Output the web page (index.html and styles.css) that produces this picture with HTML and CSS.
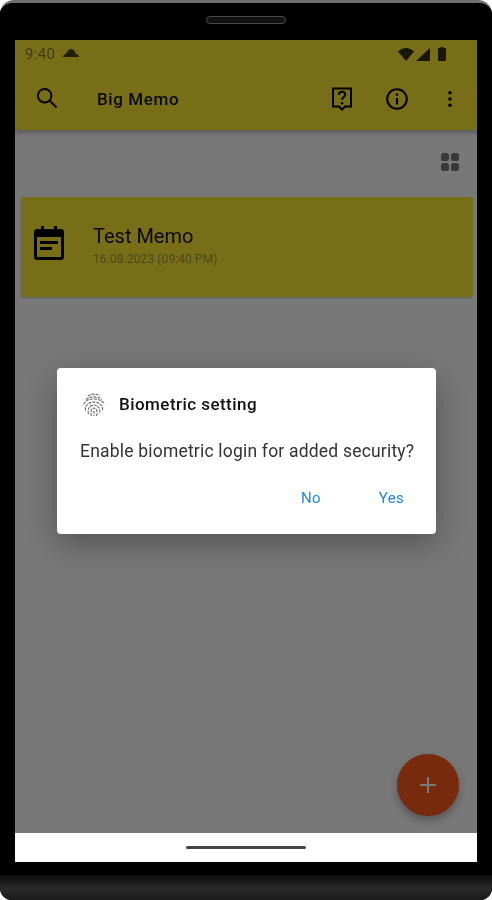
FILE: index.html
```html
<!DOCTYPE html>
<html lang="en">
<head>
<meta charset="utf-8">
<title>Big Memo</title>
<link rel="stylesheet" href="styles.css">
</head>
<body>
<div class="phone">
  <div class="bezel-top"><div class="speaker"></div></div>
  <div class="screen">
    <div class="app">
      <header class="appbar">
        <div class="status">
          <span class="time">9:40</span>
          <svg class="cloud" viewBox="0 0 16 8"><path d="M0 8C0 6 1.500 5 3 5C4 2 6 0 8 0C10.500 0 12 2 13 5C14.500 5 16 6 16 8Z"/></svg>
          <span class="status-right">
            <svg class="wifi" viewBox="0 0 16 13"><path d="M0 3.500C2 1.300 5 0 8 0C11 0 14 1.300 16 3.500L8 13Z"/></svg>
            <svg class="signal" viewBox="0 0 14 13"><path d="M14 0V13H0Z"/></svg>
            <svg class="battery" viewBox="0 0 8 14"><path d="M2.500 0H5.500V1H7C7.600 1 8 1.400 8 2V13C8 13.600 7.600 14 7 14H1C.4 14 0 13.600 0 13V2C0 1.400 .4 1 1 1H2.500Z"/></svg>
          </span>
        </div>
        <div class="toolbar">
          <svg class="ic-search" viewBox="0 0 24 24"><circle class="search-ring" cx="9.500" cy="9.500" r="6"/><path class="search-handle" d="M14 14L20 20"/></svg>
          <h1 class="title">Big Memo</h1>
          <svg class="ic-help" viewBox="0 0 22 24"><path class="line" d="M2 1.500H20V19.500H14L11 22.500L8 19.500H2Z"/><path class="line" d="M7.800 8C7.800 6 9.200 4.800 11 4.800C12.800 4.800 14.200 6 14.200 7.700C14.200 10 11 10.200 11 13"/><circle cx="11" cy="16.300" r="1.300"/></svg>
          <svg class="ic-info" viewBox="0 0 24 24"><path d="M11 7h2v2h-2zm0 4h2v6h-2zm1-9C6.480 2 2 6.480 2 12s4.480 10 10 10 10-4.480 10-10S17.520 2 12 2zm0 18c-4.410 0-8-3.590-8-8s3.590-8 8-8 8 3.590 8 8-3.590 8-8 8z"/></svg>
          <svg class="ic-more" viewBox="0 0 6 20"><circle cx="3" cy="3" r="2"/><circle cx="3" cy="10" r="2"/><circle cx="3" cy="17" r="2"/></svg>
        </div>
      </header>
      <main class="content">
        <div class="view-row">
          <svg class="ic-grid" viewBox="0 0 18 18"><rect width="8" height="8" rx="2.500"/><rect x="10" width="8" height="8" rx="2.500"/><rect y="10" width="8" height="8" rx="2.500"/><rect x="10" y="10" width="8" height="8" rx="2.500"/></svg>
        </div>
        <article class="memo">
          <svg class="ic-cal" viewBox="0 0 30 34"><path d="M7 0H10V3H20V0H23V3H27C28.700 3 30 4.300 30 6V31C30 32.700 28.700 34 27 34H3C1.300 34 0 32.700 0 31V6C0 4.300 1.300 3 3 3H7ZM3 11V31H27V11ZM6 15H24V18H6ZM6 21H18V24H6Z" fill-rule="evenodd"/></svg>
          <div class="memo-text">
            <div class="memo-title">Test Memo</div>
            <div class="memo-date">16.08.2023 (09:40 PM)</div>
          </div>
        </article>
      </main>
      <button class="fab" type="button">
        <svg viewBox="0 0 16 16"><path d="M7 0H9V7H16V9H9V16H7V9H0V7H7Z"/></svg>
      </button>
      <div class="scrim"></div>
      <div class="dialog">
        <div class="dialog-head">
          <svg class="ic-finger" viewBox="0 0 24 24"><g class="fp"><path d="M6 3.500C9.500 1 14.500 1 18 3.500"/><path d="M4 7C8.500 3.500 15.500 3.500 20 7"/><path d="M2 12C2.500 8.500 7 6.500 12 6.500C17 6.500 21.500 8.500 22 12"/><path d="M3.500 18C2.500 13 7 9.500 12 9.500C17 9.500 21.500 13 20.500 18"/><path d="M6.500 21.500C5 16.500 8 12.500 12 12.500C16 12.500 19 16.500 17.500 21.500"/><path d="M9.500 23.500C8 19.500 9.500 15.500 12 15.500C14.500 15.500 16 19.500 14.500 23.500"/><path d="M12 18.500V23.500"/></g></svg>
          <h2 class="dialog-title">Biometric setting</h2>
        </div>
        <p class="dialog-msg">Enable biometric login for added security?</p>
        <div class="dialog-actions">
          <button class="action" type="button">No</button>
          <button class="action" type="button">Yes</button>
        </div>
      </div>
    </div>
    <div class="navbar"><div class="nav-pill"></div></div>
  </div>
  <div class="bezel-bottom"></div>
  <div class="chin"></div>
</div>
</body>
</html>
```
FILE: styles.css
```css
* { box-sizing: border-box; }
html, body { margin: 0; height: 900px; background: #fff; overflow: hidden; }
body { font-family: Roboto, "Liberation Sans", sans-serif; }
.phone { width: 492px; height: 900px; display: flex; flex-direction: column; background: #000; border-top: 3px solid #6e6e6e; border-radius: 14px 14px 12px 12px; overflow: hidden; filter: blur(.45px); }
.bezel-top { height: 37px; flex: none; background: #000; display: flex; justify-content: center; padding-top: 13px; }
.speaker { width: 80px; height: 8px; background: #111; border: 1px solid #4a4a4a; border-radius: 4px; }
.screen { width: 462px; height: 822px; margin-left: 15px; flex: none; display: flex; flex-direction: column; }
.app { position: relative; flex: none; height: 793px; background: #fafafa; overflow: hidden; }
.appbar { height: 90px; background: #fde733; box-shadow: 0 2px 5px rgba(0,0,0,.3); display: flex; flex-direction: column; position: relative; }
.status { height: 28px; display: flex; align-items: center; padding-left: 10px; padding-right: 31px; gap: 8px; }
.time { font-size: 15px; letter-spacing: .3px; color: #8a7d26; line-height: 28px; }
.cloud { width: 16px; height: 8px; margin-top: -2px; fill: #000; opacity: .7; }
.status-right { margin-left: auto; display: flex; align-items: center; gap: 2px; }
.wifi { width: 16px; height: 13px; fill: #000; opacity: .8; }
.signal { width: 14px; height: 13px; fill: #000; opacity: .8; }
.battery { width: 8px; height: 14px; margin-left: 6px; fill: #000; opacity: .8; }
.toolbar { flex: 1; display: flex; align-items: center; padding-left: 19px; padding-bottom: 1px; }
.ic-search { width: 27px; height: 27px; flex: none; }
.search-ring, .search-handle { fill: none; stroke: #000; stroke-width: 1.700; }
.title { margin: 0 0 0 36px; font-size: 17px; font-weight: 500; color: #111; letter-spacing: .6px; }
.ic-help { width: 22px; height: 24px; margin-left: auto; flex: none; }
.line { fill: none; stroke: #000; stroke-width: 2; }
.ic-info { width: 26px; height: 26px; margin-left: 31px; flex: none; }
.ic-more { width: 6px; height: 18px; margin-left: 37px; margin-right: 24px; flex: none; }
.content { padding: 0 6px; }
.view-row { height: 67px; display: flex; justify-content: flex-end; padding-top: 23px; padding-right: 12px; }
.ic-grid { width: 18px; height: 18px; fill: #777; }
.memo { height: 100px; background: #fde733; border-radius: 3px; display: flex; align-items: center; padding: 0 0 0 13px; box-shadow: 0 1px 2px rgba(0,0,0,.2); margin-right: -2px; }
.ic-cal { width: 30px; height: 34px; flex: none; margin-top: -8px; }
.memo-text { margin-left: 29px; margin-top: -2px; }
.memo-title { font-size: 20px; line-height: 26px; color: #111; }
.memo-date { font-size: 12px; line-height: 20px; color: #a2943a; letter-spacing: .1px; }
.fab { position: absolute; right: 18px; bottom: 17px; width: 62px; height: 62px; border: 0; border-radius: 50%; background: #fa5a1a; box-shadow: 0 4px 8px rgba(0,0,0,.3); display: flex; align-items: center; justify-content: center; padding: 0; }
.fab svg { width: 16px; height: 16px; fill: #fff; }
.scrim { position: absolute; inset: 0; background: rgba(0,0,0,.52); }
.dialog { position: absolute; left: 42px; top: 328px; width: 379px; height: 166px; background: #fff; border-radius: 4px; box-shadow: 0 10px 30px rgba(0,0,0,.3); padding: 22px 22px 0 23px; }
.dialog-head { display: flex; align-items: center; height: 28px; }
.ic-finger { width: 24px; height: 25px; flex: none; margin-left: 2px; }
.fp path { fill: none; stroke: #666; stroke-width: 1.100; stroke-dasharray: 3 1; }
.dialog-title { margin: 0 0 0 13px; font-size: 17px; font-weight: 500; color: #111; letter-spacing: .45px; }
.dialog-msg { margin: 22px 0 0; font-size: 17.500px; line-height: 22px; color: #333; white-space: nowrap; letter-spacing: .2px; }
.dialog-actions { display: flex; justify-content: flex-end; gap: 58px; margin-top: 26px; padding-right: 10px; }
.action { border: 0; background: none; padding: 0; font: 400 15px/20px Roboto, "Liberation Sans", sans-serif; letter-spacing: .3px; color: #1f86e6; }
.navbar { height: 29px; flex: none; background: #fff; display: flex; justify-content: center; padding-top: 13px; }
.nav-pill { width: 120px; height: 3px; background: #444; border-radius: 2px; }
.bezel-bottom { height: 13px; flex: none; background: #000; }
.chin { flex: 1; background: linear-gradient(#0c0c0c, #2a2a2a 55%, #1a1a1a); }
```
